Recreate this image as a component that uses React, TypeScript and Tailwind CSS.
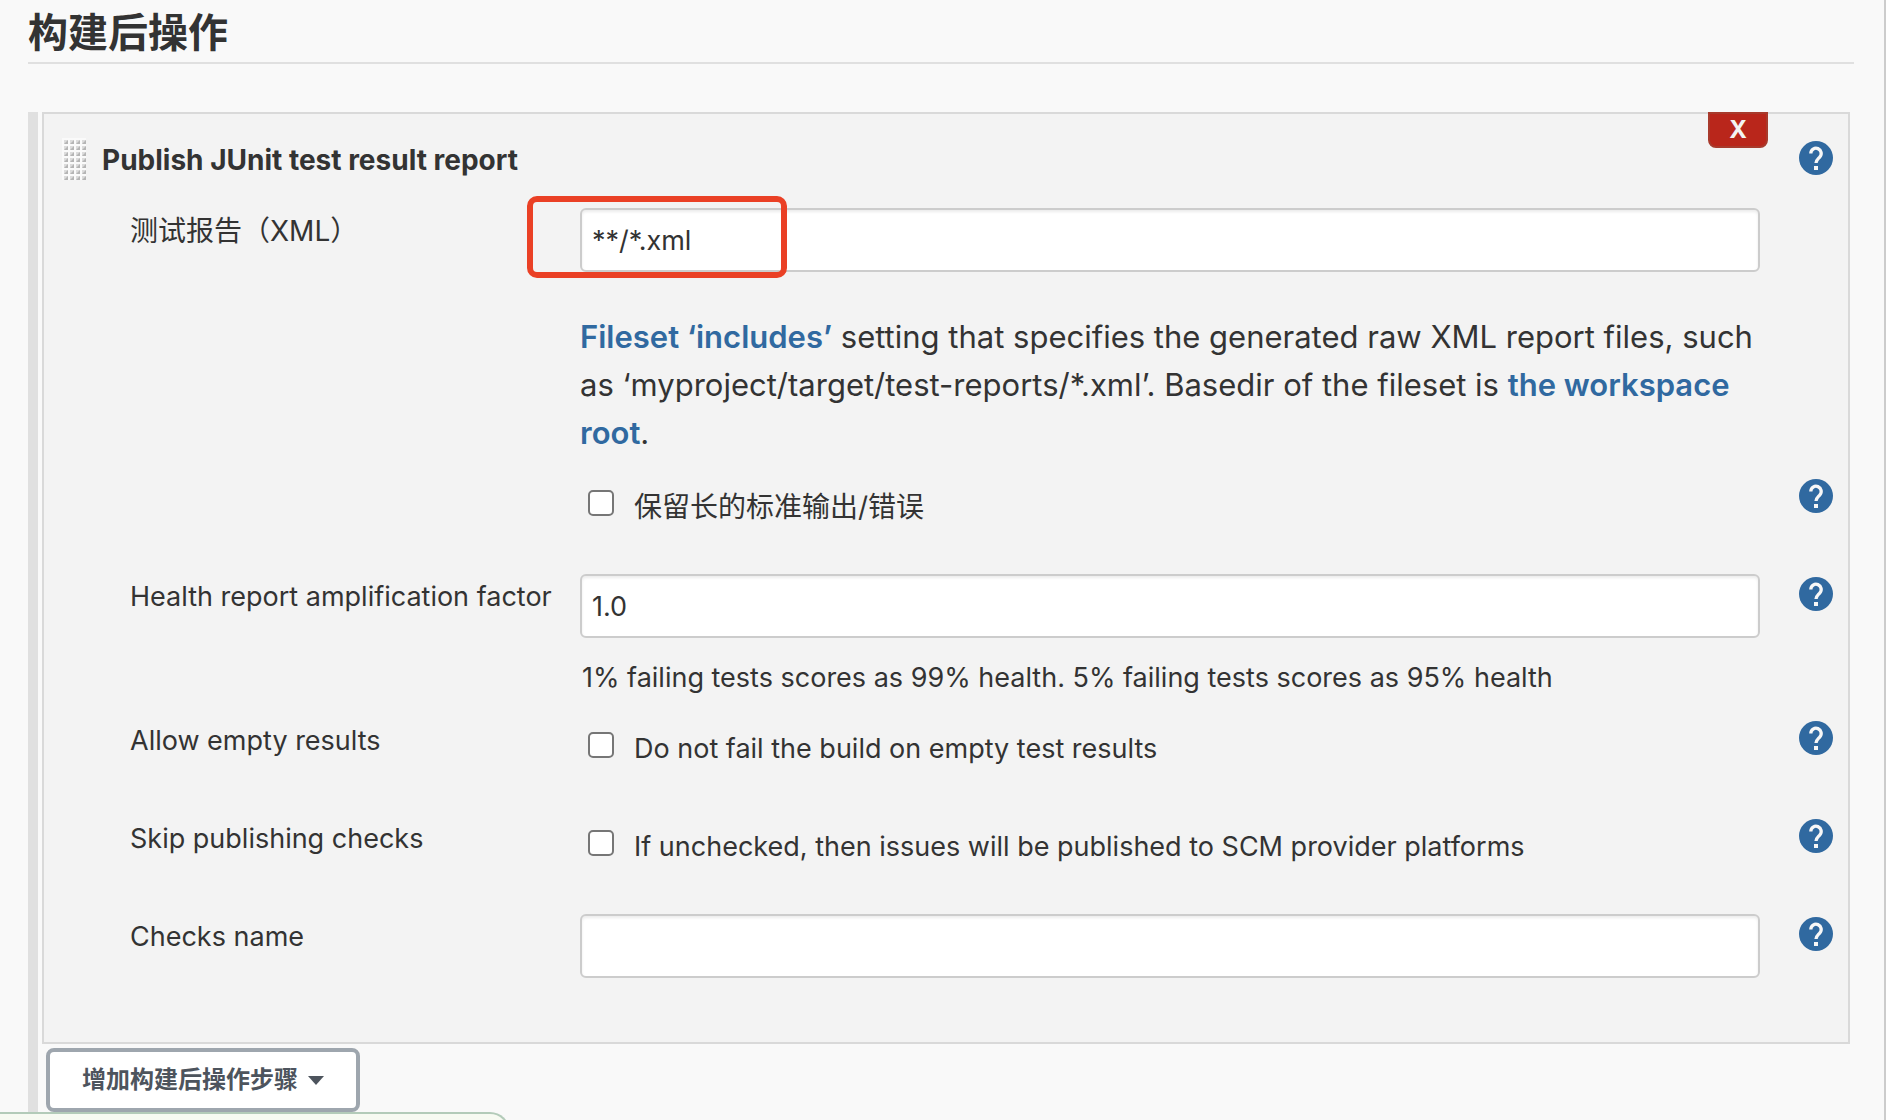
import type { ReactNode } from "react";

function HelpButton({ topic }: { topic: string }) {
  return (
    <button type="button" aria-label={`Help for feature: ${topic}`} className="mt-[3px] size-[34px] shrink-0">
      <svg viewBox="0 0 34 34" className="size-full" aria-hidden="true">
        <circle cx="17" cy="17" r="17" fill="#3069a0" />
        <path
          d="M11.8 12.4a5.2 5.2 0 1 1 8.900 3.700c-1.900 2-3.700 3.100-3.700 6"
          fill="none"
          stroke="#f7f7f7"
          strokeWidth="3.300"
        />
        <rect x="15" y="25" width="4" height="4" fill="#f7f7f7" />
      </svg>
    </button>
  );
}

function Row({
  label,
  htmlFor,
  help,
  labelClass = "",
  children,
}: {
  label?: string;
  htmlFor?: string;
  help?: string;
  labelClass?: string;
  children: ReactNode;
}) {
  return (
    <div className="flex items-start">
      <div className="w-[450px] shrink-0 pt-[3px]">
        {label && (
          <label htmlFor={htmlFor} className={`block leading-10 ${labelClass}`}>
            {label}
          </label>
        )}
      </div>
      <div className="min-w-0 flex-1">{children}</div>
      <div className="flex w-22 shrink-0 justify-end pr-[15px]">{help && <HelpButton topic={help} />}</div>
    </div>
  );
}

function TextField({ id, value = "" }: { id: string; value?: string }) {
  return (
    <input
      id={id}
      type="text"
      defaultValue={value}
      className="block h-16 w-full rounded-md border-2 border-[#ccc] bg-white px-2.5 shadow-[inset_0_2px_3px_rgba(0,0,0,0.08)] outline-none"
    />
  );
}

function CheckField({ id, text, labelClass = "" }: { id: string; text: string; labelClass?: string }) {
  return (
    <div className="flex items-start gap-5 pt-2 pb-[44px] pl-2">
      <input
        id={id}
        type="checkbox"
        className="mt-1.5 size-[26px] shrink-0 appearance-none rounded-[5px] border-2 border-[#767676] bg-white checked:bg-[#3069a0]"
      />
      <label htmlFor={id} className={`leading-[46px] ${labelClass}`}>
        {text}
      </label>
    </div>
  );
}

const gripRows = [0, 1, 2, 3, 4, 5, 6];
const gripCols = [0, 1, 2, 3];

function Grip() {
  return (
    <svg width="24" height="42" viewBox="0 0 24 42" aria-hidden="true" className="shrink-0">
      <rect width="24" height="42" fill="#fafafa" />
      {gripRows.map((r) =>
        gripCols.map((c) => (
          <g key={`${r}-${c}`}>
            <rect x={c * 6 + 2} y={r * 6 + 2} width="4" height="4" fill="#dcdcdc" />
            <path d={`M${c * 6 + 6} ${r * 6 + 2}v4h-4z`} fill="#b5b5b5" />
          </g>
        )),
      )}
    </svg>
  );
}

export default function App() {
  return (
    <div className="flex min-h-screen bg-white pr-1 font-[Inter,'Noto_Sans_CJK_SC',sans-serif] text-[27px] text-[#333]">
      <main className="flex min-w-0 flex-1 flex-col border-r-2 border-[#ccc] bg-[#f9f9f9] pr-[30px] pl-7">
        <h1 className="border-b-2 border-[#e0e0e0] pt-1 text-[40px] leading-[58px] font-bold">构建后操作</h1>

        <div className="mt-12 flex flex-1 flex-col border-l-10 border-[#e0e0e0] pr-1 pl-1">
          <section className="relative border-2 border-[#d9d9d9] bg-[#f3f3f3] pt-6 pb-16">
            <button
              type="button"
              aria-label="Delete"
              className="absolute -top-0.5 right-20 h-9 w-15 rounded-b-lg border-2 border-[#a83a2c] bg-[#b9261b] text-2xl leading-8 font-bold text-[#f3f3f3]"
            >
              X
            </button>

            <header className="flex items-start pr-[15px] pl-[18px]">
              <Grip />
              <h2 className="flex-1 pl-4 text-[28px] leading-[44px] font-bold">Publish JUnit test result report</h2>
              <HelpButton topic="Publish JUnit test result report" />
            </header>

            <div className="pt-[26px] pl-[86px]">
              <Row label="测试报告（XML）" labelClass="text-[28px]" htmlFor="results">
                <div className="relative">
                  <TextField id="results" value="**/*.xml" />
                  <div className="pointer-events-none absolute -top-3 -left-[53px] h-[82px] w-[260px] rounded-[10px] border-6 border-[#ea4025]" />
                </div>
                <p className="pt-[41px] pb-[19px] text-[31px] leading-[48px]">
                  <a href="#fileset" className="font-semibold text-[#3069a0]">
                    Fileset ‘includes’
                  </a>{" "}
                  setting that specifies the generated raw XML report files, such as
                  ‘myproject/target/test-reports/*.xml’. Basedir of the fileset is{" "}
                  <a href="#workspace" className="font-semibold text-[#3069a0]">
                    the workspace root
                  </a>
                  .
                </p>
              </Row>
              <Row help="Retain long standard output/error">
                <CheckField id="keep" text="保留长的标准输出/错误" labelClass="text-[28px]" />
              </Row>
              <Row label="Health report amplification factor" htmlFor="factor" help="Health report amplification factor">
                <TextField id="factor" value="1.0" />
                <p className="pt-5 pb-5 pl-0.5 leading-10">
                  1% failing tests scores as 99% health. 5% failing tests scores as 95% health
                </p>
              </Row>
              <Row label="Allow empty results" htmlFor="empty" help="Allow empty results">
                <CheckField id="empty" text="Do not fail the build on empty test results" />
              </Row>
              <Row label="Skip publishing checks" htmlFor="skip" help="Skip publishing checks">
                <CheckField id="skip" text="If unchecked, then issues will be published to SCM provider platforms" />
              </Row>
              <Row label="Checks name" htmlFor="checks" help="Checks name">
                <TextField id="checks" />
              </Row>
            </div>
          </section>

          <button
            type="button"
            className="mt-1 ml-1 flex h-16 items-center gap-2.5 self-start rounded-lg border-4 border-[#9ea6ae] bg-white px-8 text-2xl font-bold text-[#4d545d]"
          >
            增加构建后操作步骤
            <svg width="16" height="9" viewBox="0 0 16 9" aria-hidden="true">
              <path d="M0 0h16l-8 9z" fill="currentColor" />
            </svg>
          </button>
        </div>
      </main>
      <div className="fixed -bottom-6 left-0 h-8 w-[510px] rounded-tr-[20px] border-t-2 border-r-2 border-[#b3cbb9] bg-[#f7faf2]" />
    </div>
  );
}
